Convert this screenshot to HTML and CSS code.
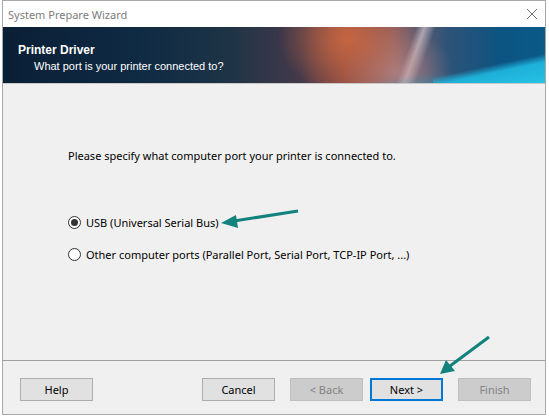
FILE: index.html
```html
<!DOCTYPE html>
<html>
<head>
<meta charset="utf-8">
<title>System Prepare Wizard</title>
<link rel="stylesheet" href="styles.css">
</head>
<body>
<div class="window">
  <div class="titlebar">
    <span class="title">System Prepare Wizard</span>
    <svg class="close" width="12" height="12" viewBox="0 0 12 12"><path d="M1 1 L11 11 M11 1 L1 11" stroke="#6f6f6f" stroke-width="1" fill="none"/></svg>
  </div>
  <div class="banner">
    <div class="banner-title">Printer Driver</div>
    <div class="banner-sub">What port is your printer connected to?</div>
  </div>
  <div class="content">
    <p class="prompt">Please specify what computer port your printer is connected to.</p>
    <div class="options">
      <label class="option"><span class="radio checked"></span><span>USB (Universal Serial Bus)</span></label>
      <label class="option"><span class="radio"></span><span>Other computer ports (Parallel Port, Serial Port, TCP-IP Port, ...)</span></label>
    </div>
  </div>
  <div class="footer">
    <button class="btn">Help</button>
    <div class="spacer"></div>
    <button class="btn">Cancel</button>
    <button class="btn disabled back">&lt; Back</button>
    <button class="btn default">Next &gt;</button>
    <button class="btn disabled finish">Finish</button>
  </div>
  <svg class="annot" width="549" height="417" viewBox="0 0 549 417">
    <g fill="#11827e" stroke="#11827e">
      <line x1="298" y1="211" x2="234" y2="221" stroke-width="3"/>
      <polygon points="221,223 236,215 238,228" stroke="none"/>
      <line x1="489" y1="337" x2="450" y2="366" stroke-width="3"/>
      <polygon points="440,374 446,360 455,371" stroke="none"/>
    </g>
  </svg>
</div>
</body>
</html>
```
FILE: styles.css
```css
html, body {
  margin: 0;
  padding: 0;
  background: #ffffff;
}
body {
  font-family: "Noto Sans", "Open Sans", sans-serif;
  font-size: 11px;
  color: #000;
}
.window {
  position: relative;
  margin-left: 2px;
  width: 542px;
  height: 413px;
  border: 1px solid #a8a8a8;
  display: flex;
  flex-direction: column;
  background: #f0f0f0;
}
.titlebar {
  height: 26px;
  background: #fff;
  display: flex;
  align-items: center;
  padding-left: 5px;
  padding-right: 7px;
}
.title {
  flex: 1;
  color: #7c7c7c;
  font-size: 11px;
}
.close {
  display: block;
}
.banner {
  height: 56px;
  border-bottom: 1px solid #c9c9c9;
  box-sizing: content-box;
  padding-left: 15px;
  display: flex;
  flex-direction: column;
  justify-content: center;
  color: #fff;
  font-family: "Liberation Sans", Arial, sans-serif;
  background:
    linear-gradient(168deg, transparent 62%, rgba(30,180,220,0.95) 72%, rgba(40,195,230,1) 100%) 430px 0 / 120px 100% no-repeat,
    radial-gradient(ellipse 90px 26px at 440px 72px, rgba(30,170,210,0.75), transparent 100%),
    radial-gradient(ellipse 70px 55px at 345px 12px, rgba(205,105,65,0.85), transparent 100%),
    radial-gradient(ellipse 55px 45px at 395px 45px, rgba(200,150,150,0.55), transparent 100%),
    linear-gradient(110deg, transparent 73.5%, rgba(255,240,240,0.5) 75%, transparent 77%),
    linear-gradient(90deg, #0a1f36 0%, #0f2a43 25%, #1e3446 42%, #45394a 55%, #944f42 63%, #866068 72%, #2e5377 82%, #0c5482 92%, #0b5a88 100%);
}
.banner-title {
  font-weight: bold;
  font-size: 12px;
  line-height: 15px;
  margin-top: 6px;
}
.banner-sub {
  font-size: 11px;
  line-height: 15px;
  padding-left: 16px;
  margin-top: 1px;
}
.content {
  flex: 1;
  padding: 64px 0 0 65px;
  border-bottom: 1px solid #a0a0a0;
}
.prompt {
  margin: 0;
  line-height: 16px;
}
.options {
  margin-top: 50px;
  display: flex;
  flex-direction: column;
  gap: 16px;
}
.option {
  display: flex;
  align-items: center;
  gap: 5px;
  height: 16px;
}
.radio {
  width: 11px;
  height: 11px;
  border: 1px solid #333;
  border-radius: 50%;
  background: #fff;
  display: flex;
  align-items: center;
  justify-content: center;
}
.radio.checked::after {
  content: "";
  width: 7px;
  height: 7px;
  border-radius: 50%;
  background: #333;
}
.footer {
  height: 53px;
  display: flex;
  align-items: flex-start;
  padding: 17px 14px 0 17px;
  box-sizing: border-box;
  gap: 15px;
}
.spacer {
  flex: 1;
}
.btn {
  width: 73px;
  height: 23px;
  font-family: inherit;
  font-size: 11px;
  background: #e1e1e1;
  border: 1px solid #adadad;
  color: #000;
  padding: 0;
  margin: 0;
}
.btn.back {
  margin-right: -8px;
}
.btn.disabled {
  background: #cccccc;
  border-color: #bfbfbf;
  color: #838383;
}
.btn.default {
  border: 2px solid #0078d7;
}
.annot {
  position: absolute;
  left: -3px;
  top: -1px;
  pointer-events: none;
}
```
